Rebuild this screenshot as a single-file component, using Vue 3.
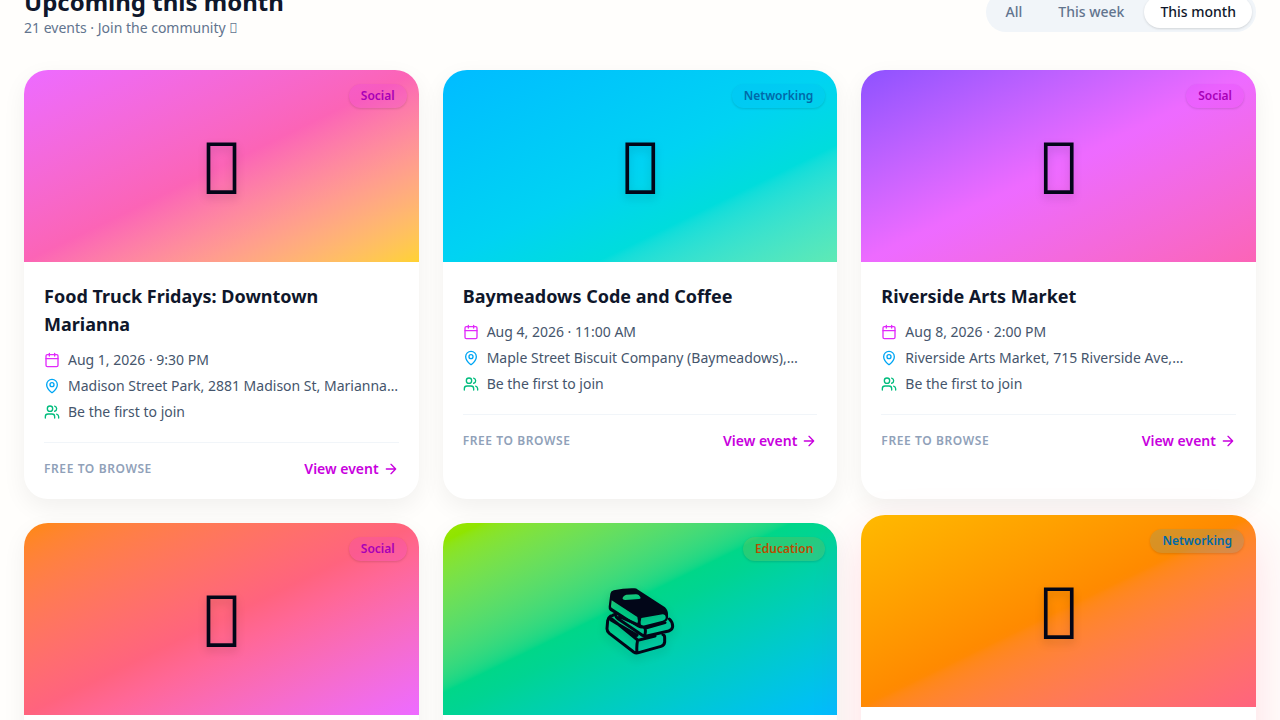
<template>
  <div class="page">
    <section class="events">
      <header class="events-header">
        <div>
          <h2>Upcoming this month</h2>
          <p class="subtitle">21 events · Join the community {{ glyph }}</p>
        </div>
        <div class="filters">
          <button
            v-for="range in ranges"
            :key="range"
            type="button"
            class="filter"
            :class="{ active: range === activeRange }"
            @click="activeRange = range"
          >{{ range }}</button>
        </div>
      </header>

      <div class="event-grid">
        <article
          v-for="event in events"
          :key="event.id"
          class="event-card"
          :class="{ lifted: event.id === liftedId }"
        >
          <div class="cover" :class="event.cover">
            <svg v-if="event.category === 'Education'" class="cover-books" viewBox="510 221 210 216">
              <path class="line" d="M527 320Q519 325 518 334L516 358Q516 366 523 372L596 428Q603 433 611 430L678 411Q688 408 689 398V385Q689 378 684 376M529 328L608 392Q604 410 606 430M608 393L660 380M533 318L541 314M541 316Q543 324 549 328L622 378Q628 382 636 380L701 365Q713 361 713 351Q713 338 703 329M554 322L630 356Q633 366 629 378M528 332L606 378M632 356L690 340" />
              <path d="M526 253Q527 246 536 243Q568 236 598 237Q604 237 609 241L690 294Q700 303 699 318Q701 330 693 336L625 356Q616 359 608 354L525 304Q520 300 521 292ZM530 273L528 291Q528 295 532 297L606 345Q611 334 607 323ZM619 326Q615 338 618 351L683 334Q693 331 692 323Q691 315 683 315ZM564 263Q560 268 566 271L571 272L613 269Q619 267 616 263L611 257Q608 255 603 255L574 256Q569 257 564 263Z" />
            </svg>
            <span v-else class="cover-glyph">{{ glyph }}</span>
            <span class="badge" :class="event.category.toLowerCase()">{{ event.category }}</span>
          </div>
          <div class="card-body">
            <template v-if="event.title">
              <h3>{{ event.title }}</h3>
              <ul class="details">
                <li>
                  <svg class="icon date" viewBox="0 0 24 24">
                    <path d="M8 2v4M16 2v4M3 10h18" />
                    <rect x="3" y="4" width="18" height="18" rx="2" />
                  </svg>
                  <span>{{ event.date }}</span>
                </li>
                <li>
                  <svg class="icon place" viewBox="0 0 24 24">
                    <path d="M20 10c0 4.993-5.539 10.193-7.399 11.799a1 1 0 0 1-1.202 0C9.539 20.193 4 14.993 4 10a8 8 0 0 1 16 0" />
                    <circle cx="12" cy="10" r="3" />
                  </svg>
                  <span>{{ event.place }}</span>
                </li>
                <li>
                  <svg class="icon people" viewBox="0 0 24 24">
                    <path d="M16 21v-2a4 4 0 0 0-4-4H6a4 4 0 0 0-4 4v2" />
                    <circle cx="9" cy="7" r="4" />
                    <path d="M22 21v-2a4 4 0 0 0-3-3.87M16 3.13a4 4 0 0 1 0 7.75" />
                  </svg>
                  <span>Be the first to join</span>
                </li>
              </ul>
              <footer class="card-footer">
                <span class="price">Free to browse</span>
                <a href="#" class="view-link">
                  View event
                  <svg class="icon" viewBox="0 0 24 24">
                    <path d="M5 12h14M12 5l7 7-7 7" />
                  </svg>
                </a>
              </footer>
            </template>
          </div>
        </article>
      </div>
    </section>
  </div>
</template>

<script setup>
import { ref } from 'vue';

const ranges = ['All', 'This week', 'This month'];
const activeRange = ref('This month');
const liftedId = 6;

// no installed font has this one, so it comes out as an empty box
const glyph = '\u{10FFF0}';

const events = [
  {
    id: 1,
    title: 'Food Truck Fridays: Downtown Marianna',
    date: 'Aug 1, 2026 · 9:30 PM',
    place: 'Madison Street Park, 2881 Madison St, Marianna…',
    category: 'Social',
    cover: 'sunset'
  },
  {
    id: 2,
    title: 'Baymeadows Code and Coffee',
    date: 'Aug 4, 2026 · 11:00 AM',
    place: 'Maple Street Biscuit Company (Baymeadows),…',
    category: 'Networking',
    cover: 'lagoon'
  },
  {
    id: 3,
    title: 'Riverside Arts Market',
    date: 'Aug 8, 2026 · 2:00 PM',
    place: 'Riverside Arts Market, 715 Riverside Ave,…',
    category: 'Social',
    cover: 'orchid'
  },
  { id: 4, category: 'Social', cover: 'coral' },
  { id: 5, category: 'Education', cover: 'meadow' },
  { id: 6, category: 'Networking', cover: 'citrus' }
];
</script>

<style>
body {
  margin: 0;
  background: #fffefc;
}
</style>

<style scoped>
.page {
  height: 100vh;
  overflow: hidden;
  font-family: "Noto Sans", sans-serif;
  color: #0f172b;
}
/* the list is scrolled a little past its heading */
.events {
  margin-top: -14px;
  padding: 0 24px;
}
.events-header {
  display: flex;
  justify-content: space-between;
  align-items: center;
  margin-bottom: 32px;
}
h2 {
  margin: 0;
  font-size: 24px;
  line-height: 32px;
  font-weight: 700;
}
.subtitle {
  margin: 0;
  font-size: 14px;
  line-height: 20px;
  color: #62748e;
}
.filters {
  display: flex;
  gap: 4px;
  padding: 4px;
  border-radius: 999px;
  background: #f1f5f9;
}
.filter {
  padding: 6px 16px;
  border: none;
  border-radius: 999px;
  background: none;
  font-family: inherit;
  font-size: 14px;
  line-height: 20px;
  font-weight: 500;
  color: #62748e;
  cursor: pointer;
}
.filter.active {
  background: #fff;
  color: #0f172b;
  box-shadow: 0 1px 3px rgba(0, 0, 0, 0.08), 0 1px 2px rgba(0, 0, 0, 0.06);
}
.event-grid {
  display: grid;
  grid-template-columns: repeat(3, minmax(0, 1fr));
  gap: 24px;
}
.event-card {
  overflow: hidden;
  border-radius: 24px;
  background: #fff;
  box-shadow: 0 8px 24px rgba(0, 0, 0, 0.06);
}
.event-card.lifted {
  transform: translateY(-8px);
  box-shadow: 0 20px 50px rgba(255, 32, 86, 0.15);
}
.cover {
  position: relative;
  display: flex;
  align-items: center;
  justify-content: center;
  height: 192px;
}
.cover-glyph {
  font-size: 72px;
  line-height: 72px;
  color: #020618;
  filter: drop-shadow(0 4px 4px rgba(0, 0, 0, 0.15));
}
.cover-books {
  width: 70px;
  height: 72px;
  fill: #020618;
  fill-rule: evenodd;
  filter: drop-shadow(0 4px 4px rgba(0, 0, 0, 0.15));
}
.cover-books .line {
  fill: none;
  stroke: #020618;
  stroke-width: 9;
  stroke-linecap: round;
  stroke-linejoin: round;
}
.sunset {
  background: linear-gradient(to bottom right in oklab, oklch(74% 0.238 322.16), oklch(71.8% 0.202 349.76), oklch(87.9% 0.169 91.6));
}
.lagoon {
  background: linear-gradient(to bottom right in oklab, oklch(74.6% 0.16 232.66), oklch(78.9% 0.154 211.53), oklch(84.5% 0.143 164.98));
}
.orchid {
  background: linear-gradient(to bottom right in oklab, oklch(60.6% 0.25 292.72), oklch(74% 0.238 322.16), oklch(71.8% 0.202 349.76));
}
.coral {
  background: linear-gradient(to bottom right in oklab, oklch(75% 0.183 55.93), oklch(71.2% 0.194 13.43), oklch(74% 0.238 322.16));
}
.meadow {
  background: linear-gradient(to bottom right in oklab, oklch(84.1% 0.238 128.85), oklch(76.5% 0.177 163.22), oklch(74.6% 0.16 232.66));
}
.citrus {
  background: linear-gradient(to bottom right in oklab, oklch(82.8% 0.189 84.43), oklch(75% 0.183 55.93), oklch(71.2% 0.194 13.43));
}
.badge {
  position: absolute;
  top: 14px;
  right: 12px;
  padding: 4px 12px;
  border-radius: 999px;
  font-size: 12px;
  line-height: 16px;
  font-weight: 600;
  box-shadow: 0 1px 3px rgba(0, 0, 0, 0.08), 0 1px 2px rgba(0, 0, 0, 0.06);
}
.badge.social {
  background: rgba(225, 42, 251, 0.15);
  color: #a800b7;
}
.badge.networking {
  background: rgba(0, 166, 244, 0.15);
  color: #0069a8;
}
.badge.education {
  background: rgba(254, 154, 0, 0.15);
  color: #bb4d00;
}
.card-body {
  min-height: 168px;
  padding: 20px;
}
h3 {
  margin: 0 0 12px;
  font-size: 18px;
  line-height: 28px;
  font-weight: 700;
}
.details {
  display: flex;
  flex-direction: column;
  gap: 6px;
  margin: 0 0 20px;
  padding: 0;
  list-style: none;
  font-size: 14px;
  line-height: 20px;
  color: #45556c;
}
.details li {
  display: flex;
  align-items: center;
  gap: 8px;
}
.icon {
  flex: none;
  width: 16px;
  height: 16px;
  fill: none;
  stroke: currentColor;
  stroke-width: 2;
  stroke-linecap: round;
  stroke-linejoin: round;
}
.icon.date {
  color: #e12afb;
}
.icon.place {
  color: #00a6f4;
}
.icon.people {
  color: #00bc7d;
}
.card-footer {
  display: flex;
  justify-content: space-between;
  align-items: center;
  padding-top: 16px;
  border-top: 1px solid #f1f5f9;
}
.price {
  font-size: 12px;
  line-height: 16px;
  font-weight: 600;
  letter-spacing: 0.6px;
  text-transform: uppercase;
  color: #90a1b9;
}
.view-link {
  display: flex;
  align-items: center;
  gap: 4px;
  font-size: 14px;
  line-height: 20px;
  font-weight: 600;
  color: #c800de;
  text-decoration: none;
}
</style>
